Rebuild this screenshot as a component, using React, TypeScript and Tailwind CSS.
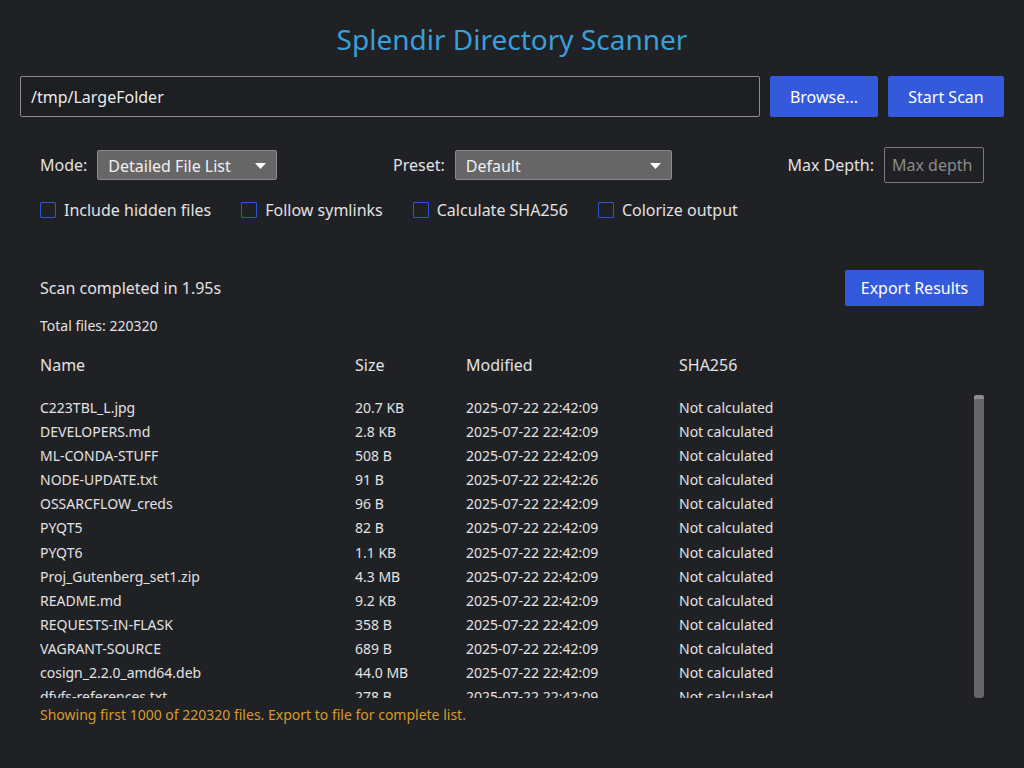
import { useState } from "react";

const files = [
  ["C223TBL_L.jpg", "20.7 KB", "2025-07-22 22:42:09"],
  ["DEVELOPERS.md", "2.8 KB", "2025-07-22 22:42:09"],
  ["ML-CONDA-STUFF", "508 B", "2025-07-22 22:42:09"],
  ["NODE-UPDATE.txt", "91 B", "2025-07-22 22:42:26"],
  ["OSSARCFLOW_creds", "96 B", "2025-07-22 22:42:09"],
  ["PYQT5", "82 B", "2025-07-22 22:42:09"],
  ["PYQT6", "1.1 KB", "2025-07-22 22:42:09"],
  ["Proj_Gutenberg_set1.zip", "4.3 MB", "2025-07-22 22:42:09"],
  ["README.md", "9.2 KB", "2025-07-22 22:42:09"],
  ["REQUESTS-IN-FLASK", "358 B", "2025-07-22 22:42:09"],
  ["VAGRANT-SOURCE", "689 B", "2025-07-22 22:42:09"],
  ["cosign_2.2.0_amd64.deb", "44.0 MB", "2025-07-22 22:42:09"],
  ["dfvfs-references.txt", "278 B", "2025-07-22 22:42:09"],
  ["docker-compose.yml", "1.4 KB", "2025-07-22 22:42:09"],
];

function Select({ value, width }: { value: string; width: string }) {
  return (
    <div
      className={`flex h-[30px] items-center justify-between rounded-[2px] border border-[#8a8a8a] bg-[#666666] pl-[10px] pr-[10px] pt-[1px] text-[16px] text-[#f0f0f0] ${width}`}
    >
      <span>{value}</span>
      <svg width="11" height="6" viewBox="0 0 11 6">
        <path d="M0 0 L11 0 L5.5 6 Z" fill="#ffffff" />
      </svg>
    </div>
  );
}

function Check({ label }: { label: string }) {
  const [on, setOn] = useState(false);
  return (
    <label className="flex cursor-pointer items-center gap-[8px]" onClick={() => setOn(!on)}>
      <span className="h-[16px] w-[16px] rounded-[1px] border-[1.5px] border-[#2d56d0]" />
      <span>{label}</span>
    </label>
  );
}

export default function App() {
  return (
    <div className="min-h-screen bg-[#202125] font-['Noto_Sans',_'Open_Sans',_sans-serif] text-[#e2e2e2]">
      <h1 className="pt-[21px] text-center text-[28px] leading-[36px] text-[#3a9fd6]">
        Splendir Directory Scanner
      </h1>

      <div className="mt-[19px] flex h-[41px] gap-[10px] px-[20px]">
        <div className="flex flex-1 items-center rounded-[2px] border border-[#8c8c8c] bg-[#1d1e22] px-[10px] text-[16px] text-[#ececec]">
          /tmp/LargeFolder
        </div>
        <button className="w-[108px] rounded-[2px] bg-[#3459db] text-[16px] text-white">Browse...</button>
        <button className="w-[116px] rounded-[2px] bg-[#3459db] text-[16px] text-white">Start Scan</button>
      </div>

      <div className="mt-[30px] flex h-[36px] items-center justify-between px-[40px] text-[16px]">
        <div className="flex items-center gap-[10px]">
          <span>Mode:</span>
          <Select value="Detailed File List" width="w-[180px]" />
        </div>
        <div className="flex items-center gap-[10px]">
          <span>Preset:</span>
          <Select value="Default" width="w-[217px]" />
        </div>
        <div className="flex items-center gap-[10px]">
          <span>Max Depth:</span>
          <div className="flex h-[36px] w-[100px] items-center rounded-[2px] border border-[#7a7a7a] px-[7px] text-[#8a8a8a]">
            Max depth
          </div>
        </div>
      </div>

      <div className="mt-[15px] flex h-[24px] items-center gap-[30px] px-[40px] text-[16px]">
        <Check label="Include hidden files" />
        <Check label="Follow symlinks" />
        <Check label="Calculate SHA256" />
        <Check label="Colorize output" />
      </div>

      <div className="mt-[48px] flex h-[36px] items-center justify-between px-[40px] text-[16px]">
        <span>Scan completed in 1.95s</span>
        <button className="h-[36px] w-[139px] rounded-[2px] bg-[#3459db] text-white">Export Results</button>
      </div>

      <div className="mt-[10px] px-[40px] text-[14px] leading-[20px]">Total files: 220320</div>

      <div className="mt-[17px] grid grid-cols-[315px_111px_213px_1fr] px-[40px] text-[16px] leading-[24px]">
        <span>Name</span>
        <span>Size</span>
        <span>Modified</span>
        <span>SHA256</span>
      </div>

      <div className="mt-[18px] flex h-[303px] px-[40px]">
        <div className="flex-1 overflow-hidden text-[14px]">
          {files.map(([name, size, mod]) => (
            <div key={name} className="grid h-[24.17px] grid-cols-[315px_111px_213px_1fr] items-center">
              <span>{name}</span>
              <span>{size}</span>
              <span>{mod}</span>
              <span>Not calculated</span>
            </div>
          ))}
        </div>
        <div className="flex w-[10px] flex-col overflow-hidden rounded-b-[3px]">
          <div className="h-[4px] rounded-t-[2px] bg-[#8e8e8e]" />
          <div className="flex-1 bg-[#666666]" />
        </div>
      </div>

      <div className="mt-[7px] px-[40px] text-[14px] leading-[20px] text-[#d99a2b]">
        Showing first 1000 of 220320 files. Export to file for complete list.
      </div>
    </div>
  );
}
